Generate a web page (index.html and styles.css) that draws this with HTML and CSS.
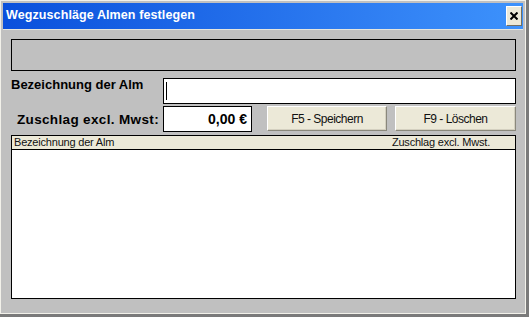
FILE: index.html
```html
<!DOCTYPE html>
<html lang="de">
<head>
  <meta charset="UTF-8" />
  <title>Wegzuschläge Almen festlegen</title>
  <link rel="stylesheet" href="styles.css">
</head>
<body>
  <div class="window">
    <div class="titlebar">
      <span class="title">Wegzuschläge Almen festlegen</span>
      <span class="close">
        <svg width="8" height="8" viewBox="0 0 8 8"><path d="M0.5 0.5 L7.5 7.5 M7.5 0.5 L0.5 7.5" stroke="#000" stroke-width="2"/></svg>
      </span>
    </div>

    <div class="content">
      <div class="banner"></div>

      <div class="form">
        <label class="lbl lbl-name">Bezeichnung der Alm</label>
        <div class="field field-name"><span class="caret"></span></div>

        <label class="lbl lbl-fee">Zuschlag excl. Mwst:</label>
        <div class="fee-row">
          <div class="field field-fee">0,00 €</div>
          <button class="btn btn-save">F5 - Speichern</button>
          <button class="btn btn-delete">F9 - Löschen</button>
        </div>
      </div>

      <div class="list">
        <div class="list-head">
          <span>Bezeichnung der Alm</span>
          <span>Zuschlag excl. Mwst.</span>
        </div>
      </div>
    </div>
  </div>
</body>
</html>
```

FILE: styles.css
```css
* {
  box-sizing: border-box;
}

body {
  margin: 0;
  width: 529px;
  height: 317px;
  background-color: #7a7a7a;
  font-family: 'Liberation Sans', Arial, sans-serif;
  color: #000;
}

.window {
  width: 526px;
  height: 314px;
  background-color: #c0c0c0;
  border: 1px solid #f2f1ea;
  padding: 2px;
  display: flex;
  flex-direction: column;
}

.titlebar {
  height: 27px;
  display: flex;
  align-items: flex-start;
  justify-content: space-between;
  background: linear-gradient(to right, #0a50dc, #2f7ef2 70%, #3d92fc);
  border-bottom: 1px solid #e6e6de;
}

.title {
  font-family: 'Liberation Sans', Arial, sans-serif;
  font-weight: bold;
  font-size: 12.5px;
  color: #fff;
  padding: 5px 0 0 3px;
  letter-spacing: 0.1px;
}

.close {
  width: 16px;
  height: 20px;
  margin: 3px 1px 0 0;
  background-color: #ece9d8;
  border-top: 1px solid #fff;
  border-left: 1px solid #fff;
  border-right: 1px solid #716f64;
  border-bottom: 1px solid #716f64;
  display: flex;
  align-items: center;
  justify-content: center;
}

.content {
  padding: 9px 8px 0 8px;
}

.banner {
  width: 505px;
  height: 32px;
  border: 1px solid #000;
  background-color: #c0c0c0;
  margin-bottom: 7px;
}

.form {
  display: grid;
  grid-template-columns: 149px 353px;
  column-gap: 3px;
  row-gap: 2px;
  margin-bottom: 3px;
}

.lbl {
  font-weight: bold;
  font-size: 13px;
  line-height: 15px;
}

.lbl-name {
  align-self: start;
  margin-top: -1px;
}

.lbl-fee {
  align-self: center;
  text-align: right;
  padding-right: 1px;
  font-size: 13.5px;
  letter-spacing: 0.35px;
}

.field {
  height: 26px;
  background-color: #fff;
  border: 1px solid #000;
}

.field-name {
  padding: 3px 0 0 2px;
}

.caret {
  display: block;
  width: 1px;
  height: 18px;
  background-color: #000;
}

.fee-row {
  display: flex;
  align-items: flex-start;
}

.field-fee {
  width: 89px;
  margin-right: 15px;
  font-weight: bold;
  font-size: 14px;
  line-height: 24px;
  text-align: right;
  padding-right: 4px;
}

.btn {
  height: 25px;
  padding: 0;
  font-family: 'Liberation Sans', Arial, sans-serif;
  font-size: 12px;
  letter-spacing: -0.5px;
  color: #111;
  background-color: #ece9d8;
  border-top: 1px solid #fff;
  border-left: 1px solid #fff;
  border-right: 1px solid #8a887c;
  border-bottom: 1px solid #8a887c;
  box-shadow: inset -1px -1px 0 #d4d0c0;
}

.btn-save {
  width: 120px;
  margin-right: 8px;
}

.btn-delete {
  width: 121px;
}

.list {
  width: 505px;
  height: 164px;
  background-color: #fff;
  border: 1px solid #000;
}

.list-head {
  height: 14px;
  display: flex;
  justify-content: space-between;
  padding: 0 25px 0 2px;
  background-color: #ece9d8;
  border-bottom: 1px solid #000;
  font-size: 11px;
  line-height: 13px;
  letter-spacing: -0.2px;
  color: #111;
}
```
